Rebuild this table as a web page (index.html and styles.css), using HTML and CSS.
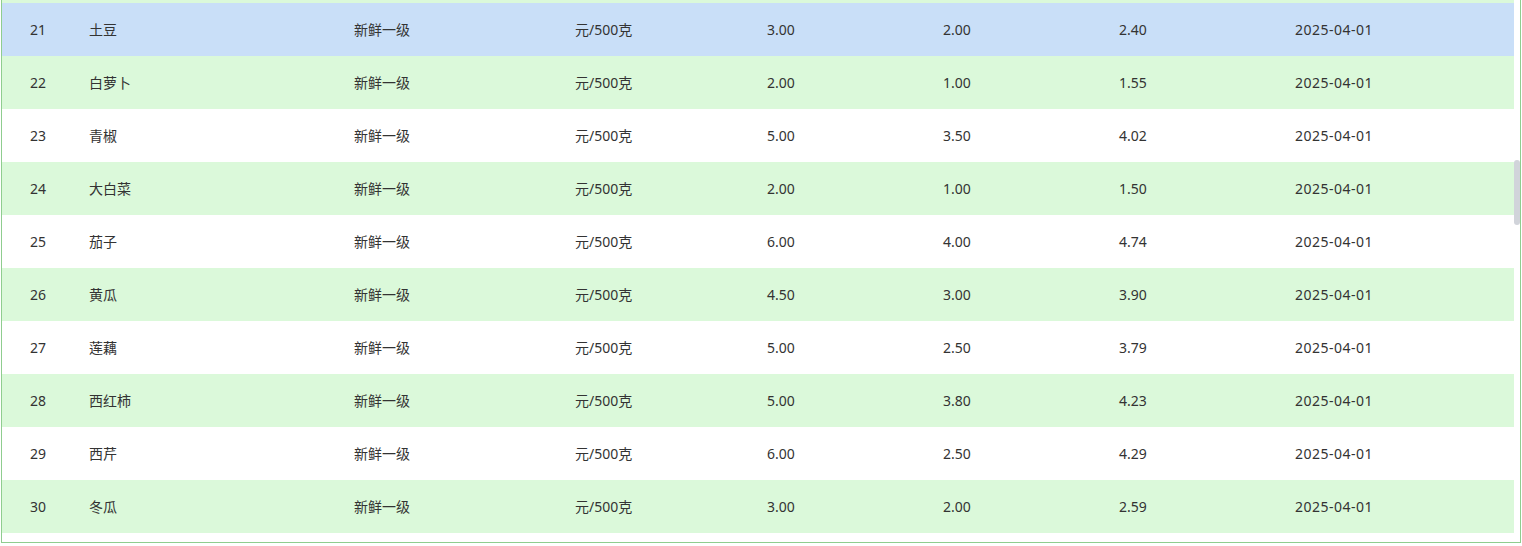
FILE: index.html
```html
<!DOCTYPE html>
<html lang="zh-CN">
<head>
<meta charset="utf-8">
<title>价格表</title>
<link rel="stylesheet" href="styles.css">
</head>
<body>
<div class="panel">
  <div class="body-area">
    <div class="rows">
      <div class="row striped peek"></div>
      <div class="row current"><span>21</span><span>土豆</span><span>新鲜一级</span><span>元/500克</span><span>3.00</span><span>2.00</span><span>2.40</span><span class="date">2025-04-01</span></div>
      <div class="row striped"><span>22</span><span>白萝卜</span><span>新鲜一级</span><span>元/500克</span><span>2.00</span><span>1.00</span><span>1.55</span><span class="date">2025-04-01</span></div>
      <div class="row"><span>23</span><span>青椒</span><span>新鲜一级</span><span>元/500克</span><span>5.00</span><span>3.50</span><span>4.02</span><span class="date">2025-04-01</span></div>
      <div class="row striped"><span>24</span><span>大白菜</span><span>新鲜一级</span><span>元/500克</span><span>2.00</span><span>1.00</span><span>1.50</span><span class="date">2025-04-01</span></div>
      <div class="row"><span>25</span><span>茄子</span><span>新鲜一级</span><span>元/500克</span><span>6.00</span><span>4.00</span><span>4.74</span><span class="date">2025-04-01</span></div>
      <div class="row striped"><span>26</span><span>黄瓜</span><span>新鲜一级</span><span>元/500克</span><span>4.50</span><span>3.00</span><span>3.90</span><span class="date">2025-04-01</span></div>
      <div class="row"><span>27</span><span>莲藕</span><span>新鲜一级</span><span>元/500克</span><span>5.00</span><span>2.50</span><span>3.79</span><span class="date">2025-04-01</span></div>
      <div class="row striped"><span>28</span><span>西红柿</span><span>新鲜一级</span><span>元/500克</span><span>5.00</span><span>3.80</span><span>4.23</span><span class="date">2025-04-01</span></div>
      <div class="row"><span>29</span><span>西芹</span><span>新鲜一级</span><span>元/500克</span><span>6.00</span><span>2.50</span><span>4.29</span><span class="date">2025-04-01</span></div>
      <div class="row striped"><span>30</span><span>冬瓜</span><span>新鲜一级</span><span>元/500克</span><span>3.00</span><span>2.00</span><span>2.59</span><span class="date">2025-04-01</span></div>
    </div>
    <div class="scrollbar"><div class="thumb"></div></div>
  </div>
</div>
</body>
</html>
```
FILE: styles.css
```css
html, body {
  margin: 0;
  padding: 0;
  background: #ffffff;
}
body {
  font-family: "Noto Sans", "Noto Sans CJK SC", sans-serif;
  font-size: 14px;
  color: #333333;
}
.panel {
  box-sizing: border-box;
  width: 1520px;
  height: 543px;
  margin-left: 1px;
  border: 1px solid #8fcd8f;
  border-top: none;
  overflow: hidden;
}
.body-area {
  display: flex;
  height: 100%;
}
.rows {
  width: 1512px;
  flex: none;
}
.row {
  display: grid;
  grid-template-columns: 59px 265px 221px 192px 176px 176px 176px 219px;
  padding-left: 28px;
  height: 53px;
  line-height: 20px;
  align-items: center;
  background: #ffffff;
  white-space: nowrap;
}
.row .date {
  letter-spacing: 0.5px;
}
.row.peek {
  height: 3px;
}
.row.striped {
  background: #dbf9da;
}
.row.current {
  background: #c9dff8;
}
.scrollbar {
  width: 6px;
  flex: none;
  position: relative;
}
.thumb {
  position: absolute;
  top: 160px;
  left: 0;
  width: 6px;
  height: 65px;
  border-radius: 3px;
  background: #d1d4da;
}
```
